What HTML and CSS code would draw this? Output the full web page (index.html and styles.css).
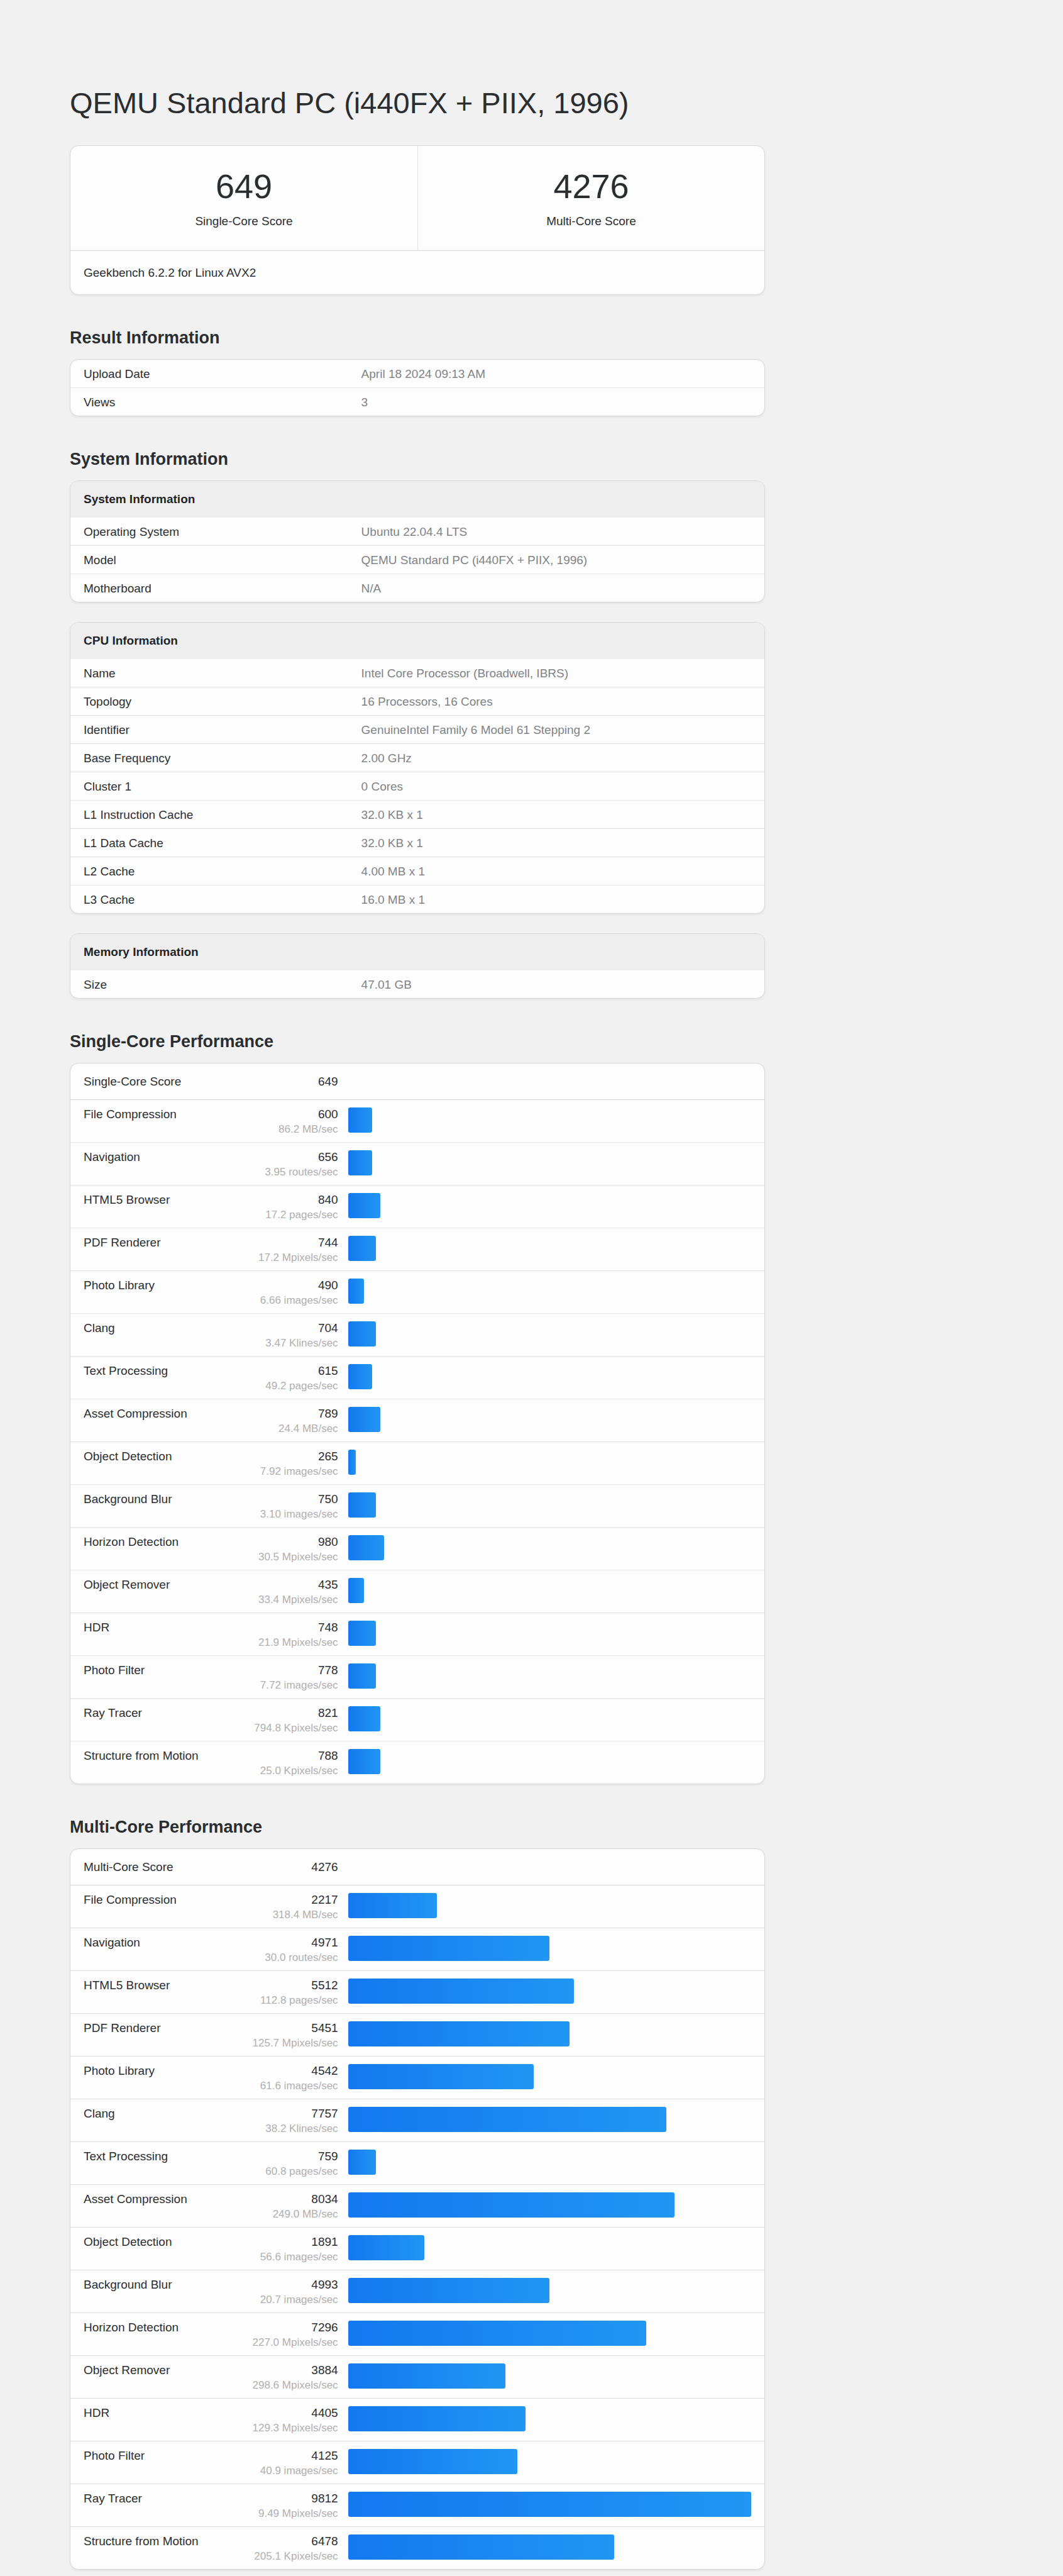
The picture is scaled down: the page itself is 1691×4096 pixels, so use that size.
FILE: index.html
```html
<!DOCTYPE html>
<html lang="en">
<head>
<meta charset="utf-8">
<meta name="viewport" content="width=device-width, initial-scale=1">
<title>QEMU Standard PC (i440FX + PIIX, 1996)</title>
<link rel="stylesheet" href="styles.css">
</head>
<body>
<main class="page">
<h1 class="title">QEMU Standard PC (i440FX + PIIX, 1996)</h1>

<section class="card">
<div class="scores">
<div class="score-box"><div class="score-number">649</div><div class="score-label">Single-Core Score</div></div>
<div class="score-box"><div class="score-number">4276</div><div class="score-label">Multi-Core Score</div></div>
</div>
<div class="card-note">Geekbench 6.2.2 for Linux AVX2</div>
</section>

<h2 class="heading">Result Information</h2>
<div class="card">
<table class="info">
<colgroup><col class="col-name"><col></colgroup>
<tbody>
<tr><th scope="row">Upload Date</th><td>April 18 2024 09:13 AM</td></tr>
<tr><th scope="row">Views</th><td>3</td></tr>
</tbody>
</table>
</div>

<h2 class="heading">System Information</h2>
<div class="card-stack">
<div class="card">
<table class="info">
<colgroup><col class="col-name"><col></colgroup>
<thead><tr><th colspan="2">System Information</th></tr></thead>
<tbody>
<tr><th scope="row">Operating System</th><td>Ubuntu 22.04.4 LTS</td></tr>
<tr><th scope="row">Model</th><td>QEMU Standard PC (i440FX + PIIX, 1996)</td></tr>
<tr><th scope="row">Motherboard</th><td>N/A</td></tr>
</tbody>
</table>
</div>
<div class="card">
<table class="info">
<colgroup><col class="col-name"><col></colgroup>
<thead><tr><th colspan="2">CPU Information</th></tr></thead>
<tbody>
<tr><th scope="row">Name</th><td>Intel Core Processor (Broadwell, IBRS)</td></tr>
<tr><th scope="row">Topology</th><td>16 Processors, 16 Cores</td></tr>
<tr><th scope="row">Identifier</th><td>GenuineIntel Family 6 Model 61 Stepping 2</td></tr>
<tr><th scope="row">Base Frequency</th><td>2.00 GHz</td></tr>
<tr><th scope="row">Cluster 1</th><td>0 Cores</td></tr>
<tr><th scope="row">L1 Instruction Cache</th><td>32.0 KB x 1</td></tr>
<tr><th scope="row">L1 Data Cache</th><td>32.0 KB x 1</td></tr>
<tr><th scope="row">L2 Cache</th><td>4.00 MB x 1</td></tr>
<tr><th scope="row">L3 Cache</th><td>16.0 MB x 1</td></tr>
</tbody>
</table>
</div>
<div class="card">
<table class="info">
<colgroup><col class="col-name"><col></colgroup>
<thead><tr><th colspan="2">Memory Information</th></tr></thead>
<tbody>
<tr><th scope="row">Size</th><td>47.01 GB</td></tr>
</tbody>
</table>
</div>
</div>

<h2 class="heading">Single-Core Performance</h2>
<div class="card">
<table class="bench">
<thead><tr><th class="name" scope="col">Single-Core Score</th><th class="score" scope="col">649</th><td class="graph"></td></tr></thead>
<tbody>
<tr><th class="name" scope="row">File Compression</th><td class="score">600<span class="rate">86.2 MB/sec</span></td><td class="graph"><div class="bar" style="width:6%"></div></td></tr>
<tr><th class="name" scope="row">Navigation</th><td class="score">656<span class="rate">3.95 routes/sec</span></td><td class="graph"><div class="bar" style="width:6%"></div></td></tr>
<tr><th class="name" scope="row">HTML5 Browser</th><td class="score">840<span class="rate">17.2 pages/sec</span></td><td class="graph"><div class="bar" style="width:8%"></div></td></tr>
<tr><th class="name" scope="row">PDF Renderer</th><td class="score">744<span class="rate">17.2 Mpixels/sec</span></td><td class="graph"><div class="bar" style="width:7%"></div></td></tr>
<tr><th class="name" scope="row">Photo Library</th><td class="score">490<span class="rate">6.66 images/sec</span></td><td class="graph"><div class="bar" style="width:4%"></div></td></tr>
<tr><th class="name" scope="row">Clang</th><td class="score">704<span class="rate">3.47 Klines/sec</span></td><td class="graph"><div class="bar" style="width:7%"></div></td></tr>
<tr><th class="name" scope="row">Text Processing</th><td class="score">615<span class="rate">49.2 pages/sec</span></td><td class="graph"><div class="bar" style="width:6%"></div></td></tr>
<tr><th class="name" scope="row">Asset Compression</th><td class="score">789<span class="rate">24.4 MB/sec</span></td><td class="graph"><div class="bar" style="width:8%"></div></td></tr>
<tr><th class="name" scope="row">Object Detection</th><td class="score">265<span class="rate">7.92 images/sec</span></td><td class="graph"><div class="bar" style="width:2%"></div></td></tr>
<tr><th class="name" scope="row">Background Blur</th><td class="score">750<span class="rate">3.10 images/sec</span></td><td class="graph"><div class="bar" style="width:7%"></div></td></tr>
<tr><th class="name" scope="row">Horizon Detection</th><td class="score">980<span class="rate">30.5 Mpixels/sec</span></td><td class="graph"><div class="bar" style="width:9%"></div></td></tr>
<tr><th class="name" scope="row">Object Remover</th><td class="score">435<span class="rate">33.4 Mpixels/sec</span></td><td class="graph"><div class="bar" style="width:4%"></div></td></tr>
<tr><th class="name" scope="row">HDR</th><td class="score">748<span class="rate">21.9 Mpixels/sec</span></td><td class="graph"><div class="bar" style="width:7%"></div></td></tr>
<tr><th class="name" scope="row">Photo Filter</th><td class="score">778<span class="rate">7.72 images/sec</span></td><td class="graph"><div class="bar" style="width:7%"></div></td></tr>
<tr><th class="name" scope="row">Ray Tracer</th><td class="score">821<span class="rate">794.8 Kpixels/sec</span></td><td class="graph"><div class="bar" style="width:8%"></div></td></tr>
<tr><th class="name" scope="row">Structure from Motion</th><td class="score">788<span class="rate">25.0 Kpixels/sec</span></td><td class="graph"><div class="bar" style="width:8%"></div></td></tr>
</tbody>
</table>
</div>

<h2 class="heading">Multi-Core Performance</h2>
<div class="card">
<table class="bench">
<thead><tr><th class="name" scope="col">Multi-Core Score</th><th class="score" scope="col">4276</th><td class="graph"></td></tr></thead>
<tbody>
<tr><th class="name" scope="row">File Compression</th><td class="score">2217<span class="rate">318.4 MB/sec</span></td><td class="graph"><div class="bar" style="width:22%"></div></td></tr>
<tr><th class="name" scope="row">Navigation</th><td class="score">4971<span class="rate">30.0 routes/sec</span></td><td class="graph"><div class="bar" style="width:50%"></div></td></tr>
<tr><th class="name" scope="row">HTML5 Browser</th><td class="score">5512<span class="rate">112.8 pages/sec</span></td><td class="graph"><div class="bar" style="width:56%"></div></td></tr>
<tr><th class="name" scope="row">PDF Renderer</th><td class="score">5451<span class="rate">125.7 Mpixels/sec</span></td><td class="graph"><div class="bar" style="width:55%"></div></td></tr>
<tr><th class="name" scope="row">Photo Library</th><td class="score">4542<span class="rate">61.6 images/sec</span></td><td class="graph"><div class="bar" style="width:46%"></div></td></tr>
<tr><th class="name" scope="row">Clang</th><td class="score">7757<span class="rate">38.2 Klines/sec</span></td><td class="graph"><div class="bar" style="width:79%"></div></td></tr>
<tr><th class="name" scope="row">Text Processing</th><td class="score">759<span class="rate">60.8 pages/sec</span></td><td class="graph"><div class="bar" style="width:7%"></div></td></tr>
<tr><th class="name" scope="row">Asset Compression</th><td class="score">8034<span class="rate">249.0 MB/sec</span></td><td class="graph"><div class="bar" style="width:81%"></div></td></tr>
<tr><th class="name" scope="row">Object Detection</th><td class="score">1891<span class="rate">56.6 images/sec</span></td><td class="graph"><div class="bar" style="width:19%"></div></td></tr>
<tr><th class="name" scope="row">Background Blur</th><td class="score">4993<span class="rate">20.7 images/sec</span></td><td class="graph"><div class="bar" style="width:50%"></div></td></tr>
<tr><th class="name" scope="row">Horizon Detection</th><td class="score">7296<span class="rate">227.0 Mpixels/sec</span></td><td class="graph"><div class="bar" style="width:74%"></div></td></tr>
<tr><th class="name" scope="row">Object Remover</th><td class="score">3884<span class="rate">298.6 Mpixels/sec</span></td><td class="graph"><div class="bar" style="width:39%"></div></td></tr>
<tr><th class="name" scope="row">HDR</th><td class="score">4405<span class="rate">129.3 Mpixels/sec</span></td><td class="graph"><div class="bar" style="width:44%"></div></td></tr>
<tr><th class="name" scope="row">Photo Filter</th><td class="score">4125<span class="rate">40.9 images/sec</span></td><td class="graph"><div class="bar" style="width:42%"></div></td></tr>
<tr><th class="name" scope="row">Ray Tracer</th><td class="score">9812<span class="rate">9.49 Mpixels/sec</span></td><td class="graph"><div class="bar" style="width:100%"></div></td></tr>
<tr><th class="name" scope="row">Structure from Motion</th><td class="score">6478<span class="rate">205.1 Kpixels/sec</span></td><td class="graph"><div class="bar" style="width:66%"></div></td></tr>
</tbody>
</table>
</div>
</main>
</body>
</html>
```
FILE: styles.css
```css
* {
  box-sizing: border-box;
}

body {
  margin: 0;
  background: #f1f1f1;
  color: #2b2e31;
  font-family: "Liberation Sans", Arial, Helvetica, sans-serif;
  font-size: 19px;
  line-height: 28px;
}

.page {
  max-width: 1328px;
  padding: 136px 111px 10px;
}

.title {
  margin: 0 0 39px;
  font-size: 47px;
  font-weight: 400;
  line-height: 56px;
}

.heading {
  margin: 52px 0 18px;
  font-size: 27px;
  font-weight: 700;
  line-height: 32px;
}

/* Cards */
.card {
  overflow: hidden;
  border: 1px solid #d8d8d8;
  border-radius: 14px;
  background: #fdfdfd;
  box-shadow: 0 2px 4px rgba(0, 0, 0, 0.06);
}

.card-stack {
  display: flex;
  flex-direction: column;
  gap: 31px;
}

.scores {
  display: grid;
  grid-template-columns: 1fr 1fr;
  border-bottom: 1px solid #dadada;
}

.score-box {
  padding: 32px 21px;
  text-align: center;
}

.score-box + .score-box {
  border-left: 1px solid #e2e2e2;
}

.score-number {
  margin-bottom: 10px;
  font-size: 54px;
  line-height: 64px;
}

.card-note {
  padding: 21px 21px 20px;
}

/* Tables */
table {
  width: 100%;
  border-spacing: 0;
  table-layout: fixed;
}

th,
td {
  padding: 9px 21px 7px;
  border-bottom: 1px solid #e6e6e6;
  font-weight: 400;
  text-align: left;
  vertical-align: top;
}

tbody tr:last-child > * {
  border-bottom: 0;
}

.col-name {
  width: 40%;
}

.info td {
  color: #808386;
}

.info thead th {
  padding: 15px 21px 14px;
  border-bottom-color: #eeeeee;
  background: #eeeeee;
  color: #212529;
  font-weight: 700;
}

.bench thead > tr > * {
  padding-top: 15px;
  padding-bottom: 14px;
  border-bottom-color: #d6d6d6;
}

.bench tbody > tr > * {
  padding-bottom: 10px;
}

.bench .name {
  width: 20%;
  padding-right: 0;
}

.bench .score {
  width: 20%;
  padding-right: 16px;
  padding-left: 0;
  text-align: right;
}

.bench .graph {
  width: 60%;
  padding-left: 0;
}

.bench tbody .graph {
  padding-top: 12px;
}

.rate {
  display: block;
  color: #b0b0b0;
  font-size: 17px;
  line-height: 20px;
}

.bar {
  height: 40px;
  border-radius: 3px;
  background: linear-gradient(to right, #1478ef, #2196f3);
}
```
